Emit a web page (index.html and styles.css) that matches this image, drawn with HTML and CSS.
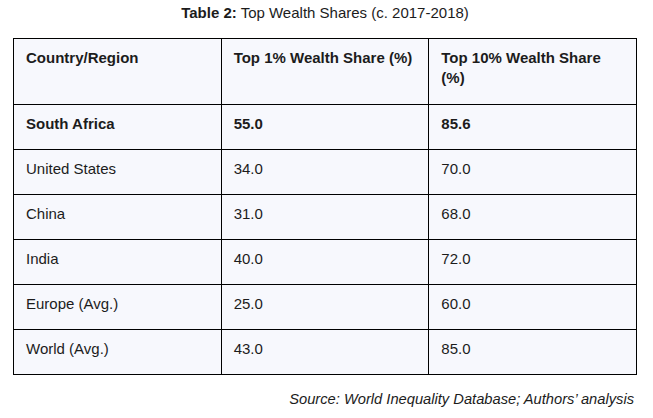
FILE: index.html
```html
<!DOCTYPE html>
<html>
<head>
<meta charset="utf-8">
<link rel="stylesheet" href="styles.css">
</head>
<body>
<div class="page">
  <p class="caption"><b>Table 2:</b> Top Wealth Shares (c. 2017-2018)</p>
  <table class="data">
    <thead>
      <tr><th>Country/Region</th><th>Top 1% Wealth Share (%)</th><th>Top 10% Wealth Share (%)</th></tr>
    </thead>
    <tbody>
      <tr class="hl"><td>South Africa</td><td>55.0</td><td>85.6</td></tr>
      <tr><td>United States</td><td>34.0</td><td>70.0</td></tr>
      <tr><td>China</td><td>31.0</td><td>68.0</td></tr>
      <tr><td>India</td><td>40.0</td><td>72.0</td></tr>
      <tr><td>Europe (Avg.)</td><td>25.0</td><td>60.0</td></tr>
      <tr><td>World (Avg.)</td><td>43.0</td><td>85.0</td></tr>
    </tbody>
  </table>
  <p class="source">Source: World Inequality Database; Authors’ analysis</p>
</div>
</body>
</html>
```

FILE: styles.css
```css
html, body {
  margin: 0;
  padding: 0;
  background: #ffffff;
}
body {
  font-family: "Liberation Sans", Arial, sans-serif;
  font-size: 15px;
  color: #1c1c1c;
}
.page {
  padding: 4px 16px 0 13px;
}
.caption {
  margin: 0 0 17px;
  text-align: center;
  line-height: 17px;
}
.caption b {
  font-weight: 700;
}
.data {
  width: 624px;
  border-collapse: collapse;
  table-layout: fixed;
  background: #f7f8fd;
}
.data th, .data td {
  border: 1px solid #000;
  text-align: left;
  vertical-align: top;
  line-height: 20px;
  padding: 9px 11px 15px 12px;
}
.data th {
  font-weight: 700;
  padding-bottom: 16px;
}
.data .hl td {
  font-weight: 700;
}
.source {
  margin: 16px 3px 0 0;
  text-align: right;
  font-style: italic;
  font-size: 14.7px;
  line-height: 17px;
}
```
